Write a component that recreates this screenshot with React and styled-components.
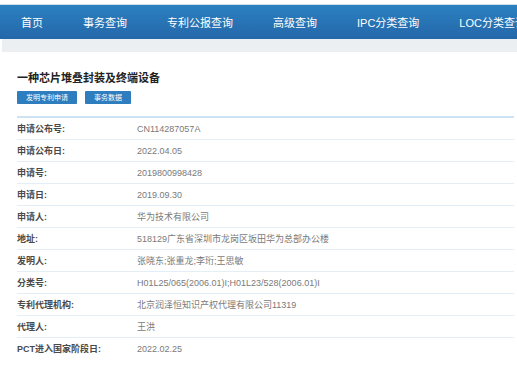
import React from 'react';
import styled, { createGlobalStyle } from 'styled-components';

const GlobalStyle = createGlobalStyle`
  body {
    margin: 0;
    background: #fff;
    font-family: 'Liberation Sans', 'Noto Sans CJK SC', sans-serif;
  }
`;

const navItems = ['首页', '事务查询', '专利公报查询', '高级查询', 'IPC分类查询', 'LOC分类查询'];

const rows = [
  ['申请公布号:', 'CN114287057A'],
  ['申请公布日:', '2022.04.05'],
  ['申请号:', '2019800998428'],
  ['申请日:', '2019.09.30'],
  ['申请人:', '华为技术有限公司'],
  ['地址:', '518129广东省深圳市龙岗区坂田华为总部办公楼'],
  ['发明人:', '张晓东;张重龙;李珩;王思敏'],
  ['分类号:', 'H01L25/065(2006.01)I;H01L23/528(2006.01)I'],
  ['专利代理机构:', '北京润泽恒知识产权代理有限公司11319'],
  ['代理人:', '王洪'],
  ['PCT进入国家阶段日:', '2022.02.25'],
];

export default function App() {
  return (
    <Page>
      <GlobalStyle />
      {/* 상단 네비게이션 */}
      <NavBar>
        {navItems.map(item => (
          <NavItem key={item}>{item}</NavItem>
        ))}
      </NavBar>
      <SubBar />
      <Content>
        <Title>一种芯片堆叠封装及终端设备</Title>
        <Tags>
          <Tag>发明专利申请</Tag>
          <Tag>事务数据</Tag>
        </Tags>
        <Table>
          {rows.map(([label, value], i) => (
            <Row key={label} last={i === rows.length - 1}>
              <Label>{label}</Label>
              <Value>{value}</Value>
            </Row>
          ))}
        </Table>
      </Content>
    </Page>
  );
}

const Page = styled.div`
  width: 517px;
  height: 370px;
  overflow: hidden;
  padding-top: 4px;
  box-sizing: border-box;
`;

const NavBar = styled.nav`
  height: 35px;
  display: flex;
  align-items: center;
  gap: 40px;
  padding-left: 21px;
  border-top: 1px solid #cfdfec;
  box-sizing: border-box;
  background: linear-gradient(#2b81c0, #2467aa);
  white-space: nowrap;
  overflow: hidden;
`;

const NavItem = styled.span`
  color: #fff;
  font-size: 11px;
  flex-shrink: 0;
`;

const SubBar = styled.div`
  height: 13px;
  margin-left: 2px;
  background: #eceff1;
`;

const Content = styled.div`
  padding: 19px 3px 0 17px;
`;

const Title = styled.h1`
  margin: 0;
  font-size: 11px;
  line-height: 14px;
  font-weight: bold;
  color: #222;
`;

const Tags = styled.div`
  display: flex;
  gap: 8px;
  margin-top: 6px;
`;

const Tag = styled.span`
  height: 13px;
  line-height: 13px;
  padding: 0 9px;
  font-size: 7px;
  color: #fff;
  background: #2d7dbf;
  border-radius: 1px;
`;

const Table = styled.div`
  margin-top: 12px;
  border-top: 2px solid #cde2f2;
`;

const Row = styled.div`
  display: flex;
  align-items: center;
  height: 21px;
  border-bottom: 1px solid ${props => (props.last ? 'transparent' : '#e3eef7')};
  font-size: 9px;
`;

const Label = styled.div`
  width: 120px;
  flex-shrink: 0;
  font-weight: bold;
  color: #4a4a4a;
`;

const Value = styled.div`
  color: #7a7a7a;
`;
